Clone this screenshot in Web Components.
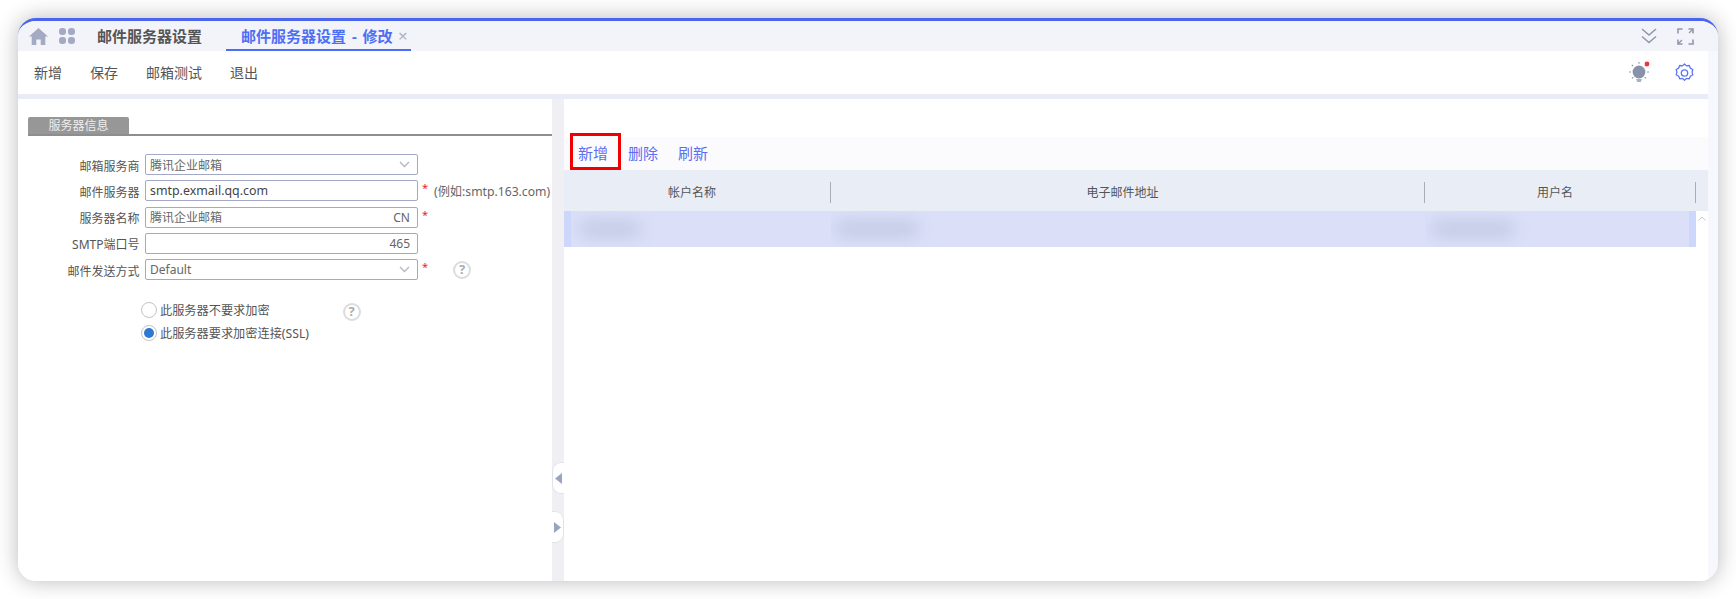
<!DOCTYPE html>
<html lang="zh">
<head>
<meta charset="utf-8">
<title>邮件服务器设置</title>
<style>
html,body{margin:0;background:#fff;}
body{padding:18px;font-family:"Noto Sans","Noto Sans CJK SC",sans-serif;color:#555;overflow:hidden;}
</style>
</head>
<body>
<app-window>
  <tab-bar slot="tabs"></tab-bar>
  <main-toolbar slot="toolbar"></main-toolbar>
  <server-form slot="left"></server-form>
  <account-grid slot="right"></account-grid>
</app-window>

<script>
const FONT = '"Noto Sans","Noto Sans CJK SC",sans-serif';

class AppWindow extends HTMLElement {
    constructor() {
        super();
        this.attachShadow({ mode: "open" }).innerHTML = `
        <style>
            :host{
                display:flex;
                flex-direction:column;
                width:1700px;
                height:563px;
                box-sizing:border-box;
                background:#f7f8fd;
                border-top:3px solid #4a64f0;
                border-radius:18px;
                box-shadow:0 0 22px rgba(0,0,0,.28);
                overflow:hidden;
            }
            .strip{height:5px;margin-right:10px;background:#e9ecf6;flex:none;}
            .body{flex:1;display:flex;min-height:0;}
            .left{width:534px;background:#fff;flex:none;}
            .split{width:12px;flex:none;background:#f0f0f4;position:relative;}
            .right{flex:1;background:#fff;margin-right:10px;min-width:0;}
            .handle{position:absolute;left:0;width:12px;height:32px;box-sizing:border-box;background:#fff;
                border:1px solid #e2e3e9;display:flex;align-items:center;justify-content:center;}
            .h1{top:363px;border-right:0;border-radius:9px 0 0 9px;}
            .h2{top:412px;border-left:0;border-radius:0 9px 9px 0;}
        </style>
        <slot name="tabs"></slot>
        <slot name="toolbar"></slot>
        <div class="strip"></div>
        <div class="body">
            <div class="left"><slot name="left"></slot></div>
            <div class="split">
                <div class="handle h1"><svg width="7" height="11" viewBox="0 0 7 11"><path d="M7 0v11L0 5.5z" fill="#99a3c4"/></svg></div>
                <div class="handle h2"><svg width="7" height="11" viewBox="0 0 7 11"><path d="M0 0v11l7-5.5z" fill="#99a3c4"/></svg></div>
            </div>
            <div class="right"><slot name="right"></slot></div>
        </div>`;
    }
}

class TabBar extends HTMLElement {
    constructor() {
        super();
        this.attachShadow({ mode: "open" }).innerHTML = `
        <style>
            :host{
                display:flex;
                align-items:center;
                height:30px;
                background:#f3f4f9;
                font:bold 15px ${FONT};
                color:#555;
                position:relative;
            }
            svg{display:block;flex:none;}
            .home{margin-left:11px;}
            .grid{margin-left:11px;}
            .t1{margin-left:22px;width:106px;white-space:nowrap;padding-bottom:2px;}
            .active{margin-left:23px;height:30px;box-sizing:border-box;border-bottom:2px solid #4a6cf7;
                padding:0 0 0 15px;display:flex;align-items:center;color:#4d6ef5;white-space:nowrap;width:185px;}
            .active span{width:157px;word-spacing:2px;flex:none;}
            .active .x{width:auto;font:normal 17px ${FONT};color:#adb3c2;line-height:1;}
            .end{margin-left:auto;display:flex;gap:20px;padding-right:24px;align-items:center;}
        </style>
        <svg class="home" width="19" height="17" viewBox="0 0 19 17"><path d="M9.5 0L19 8.6h-2.7V17h-4.6v-5.6H7.3V17H2.7V8.6H0z" fill="#a3aac3"/></svg>
        <svg class="grid" width="16" height="16" viewBox="0 0 16 16" fill="#a3aac3"><rect x="0" y="0" width="7" height="7" rx="3"/><rect x="9" y="0" width="7" height="7" rx="3"/><rect x="0" y="9" width="7" height="7" rx="3"/><rect x="9" y="9" width="7" height="7" rx="3"/></svg>
        <div class="t1">邮件服务器设置</div>
        <div class="active"><span>邮件服务器设置 - 修改</span><span class="x">×</span></div>
        <div class="end">
            <svg width="16" height="16" viewBox="0 0 16 16" fill="none" stroke="#9097b0" stroke-width="1.6"><path d="M1 1l7 6 7-6M1 8.5l7 6 7-6"/></svg>
            <svg width="17" height="17" viewBox="0 0 17 17" fill="none" stroke="#9097b0" stroke-width="1.6"><path d="M1 5.5V1h4.5M11.5 1H16v4.5M16 11.5V16h-4.5M5.5 16H1v-4.5"/><path d="M16 1l-4 4M1 16l4-4" stroke-width="1.3"/></svg>
        </div>`;
    }
}

class MainToolbar extends HTMLElement {
    constructor() {
        super();
        this.attachShadow({ mode: "open" }).innerHTML = `
        <style>
            :host{
                display:flex;
                align-items:center;
                height:43px;
                margin-right:10px;
                background:#fff;
                font:14px ${FONT};
                color:#555;
                padding-left:16px;
                gap:28px;
            }
            .txt{position:relative;top:-1px;}
            .end{margin-left:auto;display:flex;align-items:center;gap:25px;padding-right:14px;}
            svg{display:block;}
        </style>
        <span class="txt">新增</span><span class="txt">保存</span><span class="txt">邮箱测试</span><span class="txt">退出</span>
        <div class="end">
            <svg width="22" height="24" viewBox="0 0 22 24">
                <circle cx="11" cy="11" r="6.4" fill="#8793aa"/>
                <path d="M8.2 18h5.6l-.9 3H9.1z" fill="#a9b1c2"/>
                <path d="M11 1v1.8M3.8 3.8l1.3 1.3M18.2 3.8l-1.3 1.3M1 11h2M19 11h2M4 17.4l1.3-1.1M18 17.4l-1.3-1.1" stroke="#8f99ae" stroke-width="1.2" fill="none"/>
                <circle cx="19" cy="3" r="2.4" fill="#f0353b"/>
            </svg>
            <svg width="19" height="20" viewBox="0 0 19 20" fill="none" stroke="#5b76f0" stroke-width="1.3">
                <path d="M9.5 1l2 1.9 2.8-.4 1 2.6 2.5 1.4-.7 2.7.7 2.6-2.5 1.4-1 2.6-2.8-.4-2 1.9-2-1.9-2.8.4-1-2.6-2.5-1.4.7-2.6-.7-2.7 2.5-1.4 1-2.6 2.8.4z" stroke-linejoin="round"/>
                <circle cx="9.5" cy="10" r="3.2"/>
            </svg>
        </div>`;
    }
}

class FormRow extends HTMLElement {
    constructor() {
        super();
        this.attachShadow({ mode: "open" }).innerHTML = `
        <style>
            :host{display:flex;align-items:center;height:21px;margin-bottom:5.25px;font:12px ${FONT};color:#555;white-space:nowrap;}
            .label{width:121.5px;text-align:right;margin-right:5.5px;flex:none;padding-top:2px;}
            .box{width:273px;height:21px;box-sizing:border-box;flex:none;border:1px solid #a2a8c6;border-radius:2px;
                display:flex;align-items:center;justify-content:space-between;padding:0 4px;background:#fff;}
            .value{color:var(--value-color,#666);font-size:var(--value-size,12px);}
            .end{color:#666;padding-right:3px;}
            .star{color:#f01c1c;margin-left:4px;font-size:11px;width:5px;align-self:flex-start;}
            ::slotted(*){flex:none;}
        </style>
        <span class="label"></span>
        <div class="box"><span class="value"></span><span class="end"></span></div>
        <span class="star"></span>
        <slot></slot>`;
        const s = this.shadowRoot;
        s.querySelector(".label").textContent = this.getAttribute("label");
        s.querySelector(".value").textContent = this.getAttribute("value") || "";
        const end = this.getAttribute("end");
        if (end === "arrow") {
            s.querySelector(".end").innerHTML = '<svg width="11" height="7" viewBox="0 0 11 7" style="display:block" fill="none" stroke="#b4b8c2" stroke-width="1.4"><path d="M1 1l4.5 4.5L10 1"/></svg>';
        } else if (end) {
            s.querySelector(".end").textContent = end;
        }
        if (this.hasAttribute("required")) s.querySelector(".star").textContent = "*";
    }
}

class HelpIcon extends HTMLElement {
    constructor() {
        super();
        this.attachShadow({ mode: "open" }).innerHTML = `
        <style>
            :host{display:inline-flex;align-items:center;justify-content:center;width:18px;height:18px;box-sizing:border-box;
                border:2px solid #dcdcdc;border-radius:50%;font:bold 13px ${FONT};color:#acacac;line-height:1;}
        </style>?`;
    }
}

class RadioItem extends HTMLElement {
    constructor() {
        super();
        this.attachShadow({ mode: "open" }).innerHTML = `
        <style>
            :host{display:flex;align-items:center;height:23px;font:12.2px ${FONT};color:#555;white-space:nowrap;padding-left:123px;}
            .dot{width:16px;height:16px;box-sizing:border-box;border:1px solid #c4c4c4;border-radius:50%;margin-right:3px;
                flex:none;display:flex;align-items:center;justify-content:center;background:#fff;}
            :host([checked]) .dot::after{content:"";width:10px;height:10px;border-radius:50%;background:#2f78d2;}
            ::slotted(help-icon){margin-left:73px;position:relative;top:2px;}
        </style>
        <span class="dot"></span><span class="txt"></span><slot></slot>`;
        this.shadowRoot.querySelector(".txt").textContent = this.getAttribute("label");
    }
}

class ServerForm extends HTMLElement {
    constructor() {
        super();
        this.attachShadow({ mode: "open" }).innerHTML = `
        <style>
            :host{display:block;padding-top:18px;font:12px ${FONT};}
            .head{margin-left:10px;border-bottom:2px solid #8e8e8e;height:17px;margin-bottom:18px;}
            .head span{display:block;width:101px;height:17px;background:#979797;color:#eee;text-align:center;line-height:17px;border-radius:2px 2px 0 0;}
            .hint{color:#666;margin-left:7px;font-size:12.2px;}
            help-icon.h1{margin-left:26px;}
            .radios{margin-top:18px;}
        </style>
        <div class="head"><span>服务器信息</span></div>
        <form-row label="邮箱服务商" value="腾讯企业邮箱" end="arrow"></form-row>
        <form-row label="邮件服务器" value="smtp.exmail.qq.com" required style="--value-size:12.4px;--value-color:#444"><span class="hint">(例如:smtp.163.com)</span></form-row>
        <form-row label="服务器名称" value="腾讯企业邮箱" end="CN" required></form-row>
        <form-row label="SMTP端口号" end="465"></form-row>
        <form-row label="邮件发送方式" value="Default" end="arrow" required><help-icon class="h1"></help-icon></form-row>
        <div class="radios">
            <radio-item label="此服务器不要求加密"><help-icon></help-icon></radio-item>
            <radio-item label="此服务器要求加密连接(SSL)" checked></radio-item>
        </div>`;
    }
}

class LinkButton extends HTMLElement {
    constructor() {
        super();
        this.attachShadow({ mode: "open" }).innerHTML = `
        <style>
            :host{display:block;position:relative;font:15px ${FONT};color:#5b6ff0;line-height:33px;}
            :host([marked])::after{content:"";position:absolute;left:-8px;right:-13px;top:-4px;bottom:0;border:3px solid #f00000;box-sizing:border-box;}
        </style>
        <slot></slot>`;
    }
}

class AccountGrid extends HTMLElement {
    constructor() {
        super();
        this.attachShadow({ mode: "open" }).innerHTML = `
        <style>
            :host{display:block;padding-top:38px;font:12px ${FONT};color:#555;}
            .bar{display:flex;gap:20px;height:33px;padding-left:14px;background:#fbfbfe;}
            .cols{display:grid;grid-template-columns:267px 594px 271px 1fr;}
            .head{height:41px;background:#e9eef6;}
            .head div{display:flex;align-items:center;justify-content:center;position:relative;padding:3px 11px 0 0;}
            .head div:not(:last-child)::after{content:"";position:absolute;right:0;top:12px;height:21px;width:1px;background:#a9acb4;}
            .row{display:grid;grid-template-columns:267px 594px 271px 1fr;height:36px;}
            .cell{background:#dbe0f8;overflow:hidden;display:flex;align-items:center;}
            .cell:first-child{border-left:7px solid #cdd6fb;}
            .cell.last{border-right:7px solid #cdd6fb;}
            .blob{height:16px;background:#c3c9e4;filter:blur(8px);border-radius:8px;}
            .gutter{background:#fff;display:flex;justify-content:center;padding-top:3px;align-items:flex-start;}
            .sb{display:block;margin-top:2px;}
        </style>
        <div class="bar">
            <link-button marked>新增</link-button>
            <link-button>删除</link-button>
            <link-button>刷新</link-button>
        </div>
        <div class="cols head">
            <div>帐户名称</div>
            <div>电子邮件地址</div>
            <div>用户名</div>
            <div></div>
        </div>
        <div class="row">
            <div class="cell"><div class="blob" style="width:62px;margin-left:8px"></div></div>
            <div class="cell"><div class="blob" style="width:84px;margin-left:4px"></div></div>
            <div class="cell last"><div class="blob" style="width:84px;margin-left:6px"></div></div>
            <div class="gutter"><svg class="sb" width="8" height="5" viewBox="0 0 8 5" fill="none" stroke="#c4c7d0"><path d="M.5 4.5L4 1l3.5 3.5"/></svg></div>
        </div>`;
    }
}

customElements.define("app-window", AppWindow);
customElements.define("tab-bar", TabBar);
customElements.define("main-toolbar", MainToolbar);
customElements.define("form-row", FormRow);
customElements.define("help-icon", HelpIcon);
customElements.define("radio-item", RadioItem);
customElements.define("server-form", ServerForm);
customElements.define("link-button", LinkButton);
customElements.define("account-grid", AccountGrid);
</script>
</body>
</html>
